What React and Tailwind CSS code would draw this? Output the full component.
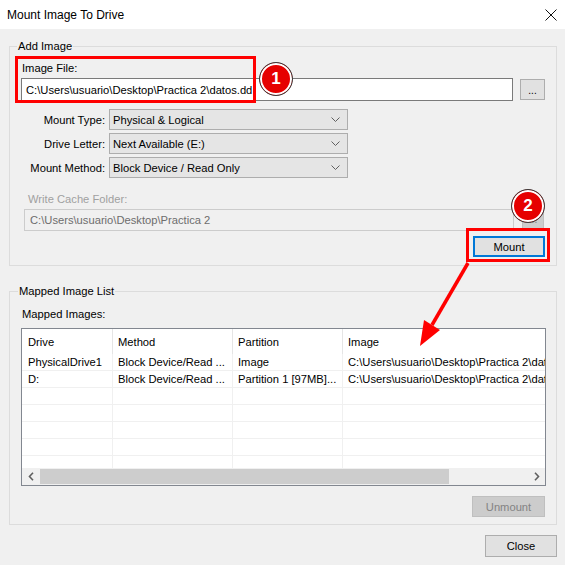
import React from "react";

function Chevron() {
  return (
    <svg width="9" height="5" viewBox="0 0 9 5" className="shrink-0">
      <path d="M0.5 0.5 L4.5 4.5 L8.5 0.5" fill="none" stroke="#606060" strokeWidth="1" />
    </svg>
  );
}

function Select({ value }) {
  return (
    <div className="w-[239px] h-[21px] bg-[#e5e5e5] border border-[#adadad] flex items-center justify-between pl-[3px] pr-[7px]">
      <span className="whitespace-nowrap">{value}</span>
      <Chevron />
    </div>
  );
}

function Badge({ n, className }) {
  return (
    <div
      className={
        "absolute w-[34px] h-[34px] rounded-full bg-[#e60000] border border-[#3a3a3a] shadow-[inset_0_0_0_2px_#ffffff] flex items-center justify-center text-white font-bold text-[17px] font-['Liberation_Sans',Arial,sans-serif] " +
        className
      }
    >
      {n}
    </div>
  );
}

const path = "C:\\Users\\usuario\\Desktop\\Practica 2\\datos.dd";
const path2 = "C:\\Users\\usuario\\Desktop\\Practica 2";

const rows = [
  ["PhysicalDrive1", "Block Device/Read ...", "Image", path],
  ["D:", "Block Device/Read ...", "Partition 1 [97MB]...", path],
  ["", "", "", ""],
  ["", "", "", ""],
  ["", "", "", ""],
  ["", "", "", ""],
  ["", "", "", ""],
];

export default function App() {
  return (
    <div className="relative w-[565px] h-[565px] overflow-hidden bg-[#f0f0f0] text-[11.2px] leading-[16px] text-black font-['Liberation_Sans',Arial,sans-serif]">
      {/* Title bar */}
      <div className="h-[29px] bg-white flex items-center justify-between pl-[7px] pr-[8px]">
        <span className="text-[12px]">Mount Image To Drive</span>
        <svg width="12" height="12" viewBox="0 0 12 12">
          <path d="M0.5 0.5 L11.5 11.5 M11.5 0.5 L0.5 11.5" stroke="#111" strokeWidth="1" fill="none" />
        </svg>
      </div>

      {/* Add Image group */}
      <div className="ml-[9px] mr-[8px] mt-[17px] h-[220px] border border-[#dcdcdc] flex flex-col">
        <div className="-mt-[9px] ml-[7px] px-[1px] w-fit bg-[#f0f0f0]">Add Image</div>
        <div className="mt-[6px] ml-[12px]">Image File:</div>
        <div className="mt-[2px] ml-[11px] flex items-center">
          <div className="w-[492px] h-[23px] bg-white border border-[#7a7a7a] flex items-center pl-[4px] whitespace-nowrap">
            {path}
          </div>
          <div className="ml-[7px] w-[25px] h-[21px] bg-[#e1e1e1] border border-[#adadad] flex items-center justify-center text-[10px] leading-[10px] pt-[2px]">
            ...
          </div>
        </div>

        <div className="mt-[8px] flex flex-col gap-[3px]">
          {[
            ["Mount Type:", "Physical & Logical"],
            ["Drive Letter:", "Next Available (E:)"],
            ["Mount Method:", "Block Device / Read Only"],
          ].map(([l, v]) => (
            <div key={l} className="flex items-center">
              <div className="w-[95px] text-right">{l}</div>
              <div className="ml-[4px]">
                <Select value={v} />
              </div>
            </div>
          ))}
        </div>

        <div className="mt-[13px] ml-[18px] text-[#a0a0a0]">Write Cache Folder:</div>
        <div className="mt-[2px] ml-[14px] flex items-start">
          <div className="w-[490px] h-[22px] bg-[#f0f0f0] border border-[#cccccc] flex items-center pl-[5px] text-[#6d6d6d] whitespace-nowrap">
            {path2}
          </div>
          <div className="ml-[8px] w-[22px] h-[20px] bg-[#cccccc] border border-[#bfbfbf] flex items-end justify-center text-[10px] leading-[10px] pb-[3px] text-[#838383]">
            ...
          </div>
        </div>
        <div className="mt-[5px] mr-[11px] flex justify-end">
          <div className="w-[72px] h-[21px] bg-[#e1e1e1] border-2 border-[#0078d7] flex items-center justify-center">
            Mount
          </div>
        </div>
      </div>

      {/* Mapped Image List group */}
      <div className="ml-[9px] mr-[8px] mt-[25px] h-[234px] border border-[#dcdcdc] flex flex-col">
        <div className="-mt-[9px] ml-[8px] px-[1px] w-fit bg-[#f0f0f0]">Mapped Image List</div>
        <div className="mt-[7px] ml-[12px]">Mapped Images:</div>
        <div className="mt-[6px] ml-[11px] w-[525px] h-[158px] border border-[#828790] bg-white flex flex-col overflow-hidden">
          <div className="h-[25px] shrink-0 grid grid-cols-[91px_120px_110px_300px]">
            {["Drive", "Method", "Partition", "Image"].map((h, i) => (
              <div
                key={h}
                className={
                  "flex items-center border-r border-[#e5e5e5] whitespace-nowrap " +
                  (i === 0 ? "pl-[6px]" : "pl-[5px]")
                }
              >
                {h}
              </div>
            ))}
          </div>
          <div className="flex-1 overflow-hidden">
            {rows.map((r, ri) => (
              <div key={ri} className="h-[17px] grid grid-cols-[91px_120px_110px_300px] border-b border-[#f0f0f0]">
                {r.map((c, ci) => (
                  <div
                    key={ci}
                    className={
                      "flex items-center border-r border-[#f0f0f0] whitespace-nowrap overflow-hidden " +
                      (ci === 0 ? "pl-[6px]" : "pl-[5px]")
                    }
                  >
                    {c}
                  </div>
                ))}
              </div>
            ))}
          </div>
          <div className="h-[17px] shrink-0 bg-[#f0f0f0] flex items-center">
            <div className="w-[17px] h-full flex items-center justify-center">
              <svg width="6" height="9" viewBox="0 0 6 9">
                <path d="M5 0.8 L1.5 4.5 L5 8.2" fill="none" stroke="#606060" strokeWidth="1.6" />
              </svg>
            </div>
            <div className="ml-[1px] w-[409px] h-[15px] bg-[#cdcdcd]" />
            <div className="flex-1 h-full flex items-center justify-end pr-[5px]">
              <svg width="6" height="9" viewBox="0 0 6 9">
                <path d="M1 0.8 L4.5 4.5 L1 8.2" fill="none" stroke="#606060" strokeWidth="1.6" />
              </svg>
            </div>
          </div>
        </div>
        <div className="mt-[10px] mr-[11px] flex justify-end">
          <div className="w-[73px] h-[21px] bg-[#cccccc] border border-[#bfbfbf] flex items-center justify-center text-[#838383]">
            Unmount
          </div>
        </div>
      </div>

      {/* Close button */}
      <div className="mt-[10px] mr-[8px] flex justify-end">
        <div className="w-[72px] h-[22px] bg-[#e1e1e1] border border-[#adadad] flex items-center justify-center">
          Close
        </div>
      </div>

      {/* Annotations */}
      <div className="absolute left-[15px] top-[56px] w-[241px] h-[47px] border-[3px] border-[#ff0000]" />
      <div className="absolute left-[466px] top-[228px] w-[84px] h-[34px] border-[3px] border-[#ff0000]" />
      <Badge n="1" className="left-[259px] top-[62px]" />
      <Badge n="2" className="left-[511px] top-[189px]" />
      <svg className="absolute left-0 top-0 pointer-events-none" width="565" height="565" viewBox="0 0 565 565">
        <line x1="468" y1="263" x2="432" y2="325" stroke="#ff0000" strokeWidth="3.5" />
        <polygon points="420,346 440,330 424,320" fill="#ff0000" />
      </svg>
    </div>
  );
}
